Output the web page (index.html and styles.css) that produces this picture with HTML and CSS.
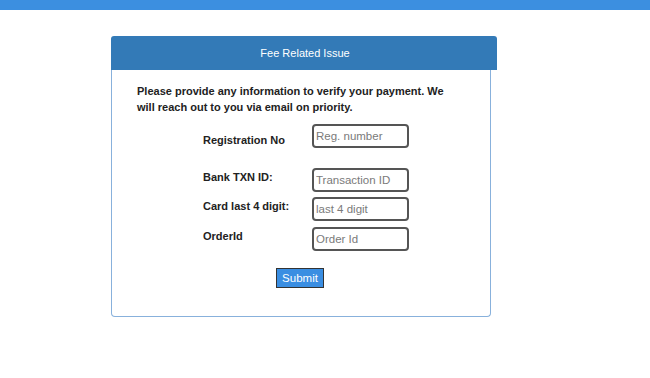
FILE: index.html
```html
<!DOCTYPE html>
<html lang="en">
<head>
<meta charset="utf-8">
<title>Fee Related Issue</title>
<link rel="stylesheet" href="styles.css">
</head>
<body>
<div class="topbar"></div>
<div class="panel">
  <div class="panel-heading">Fee Related Issue</div>
  <div class="panel-body">
    <p class="intro">Please provide any information to verify your payment. We will reach out to you via email on priority.</p>
    <form class="form">
      <div class="row row-reg">
        <label class="label">Registration No</label>
        <input class="field" type="text" placeholder="Reg. number">
      </div>
      <div class="row row-txn">
        <label class="label">Bank TXN ID:</label>
        <input class="field" type="text" placeholder="Transaction ID">
      </div>
      <div class="row row-card">
        <label class="label">Card last 4 digit:</label>
        <input class="field" type="text" placeholder="last 4 digit">
      </div>
      <div class="row row-order">
        <label class="label">OrderId</label>
        <input class="field" type="text" placeholder="Order Id">
      </div>
      <div class="actions">
        <button class="submit" type="button">Submit</button>
      </div>
    </form>
  </div>
</div>
</body>
</html>
```

FILE: styles.css
```css
* { box-sizing: border-box; }
html, body { margin: 0; padding: 0; background: #fff; }
body {
  font-family: "Liberation Sans", Arial, sans-serif;
  font-size: 11px;
  color: #222;
  width: 650px;
  height: 378px;
  overflow: hidden;
}
.topbar {
  height: 10px;
  background: #3c8fe0;
}
.panel {
  margin: 26px 0 0 111px;
  width: 386px;
}
.panel-heading {
  height: 34px;
  background: #337ab7;
  color: #fff;
  font-size: 11px;
  line-height: 34px;
  text-align: center;
  border-radius: 3px 3px 0 0;
  padding-left: 2px;
}
.panel-body {
  width: 380px;
  height: 247px;
  border: 1px solid #88b1dc;
  border-top: none;
  border-radius: 0 0 4px 4px;
  padding: 13px 0 0 25px;
}
.intro {
  margin: 0;
  width: 322px;
  font-weight: bold;
  font-size: 11px;
  line-height: 16px;
  color: #222;
}
.form {
  margin: 9px 0 0 66px;
  display: flex;
  flex-direction: column;
}
.row {
  display: flex;
  align-items: flex-start;
}
.label {
  width: 109px;
  font-weight: bold;
  font-size: 11px;
  line-height: 14px;
  padding-top: 2px;
  color: #222;
}
.row-reg { margin-bottom: 20px; }
.row-reg .label { padding-top: 9px; }
.row-txn { margin-bottom: 5px; }
.row-card { margin-bottom: 6px; }
.field {
  width: 97px;
  height: 24px;
  border: 2px solid #555;
  border-radius: 4px;
  padding: 0 2px;
  font-family: "Liberation Sans", Arial, sans-serif;
  font-size: 11.5px;
  color: #333;
  background: #fff;
  outline: none;
}
.field::placeholder { color: #7a7a7a; }
.actions {
  margin-top: 17px;
  padding-left: 73px;
}
.submit {
  width: 48px;
  height: 20px;
  padding: 0;
  background: #3a8ee2;
  color: #fff;
  border: 1px solid #333;
  font-family: "Liberation Sans", Arial, sans-serif;
  font-size: 11.5px;
  line-height: 18px;
}
```
